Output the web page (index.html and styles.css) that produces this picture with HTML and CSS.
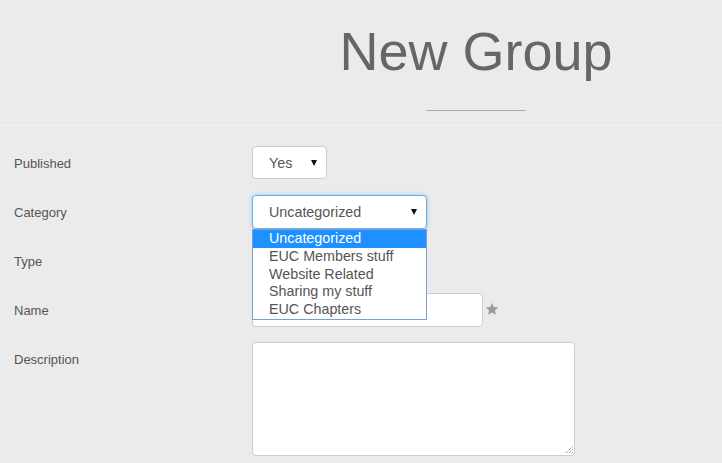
FILE: index.html
```html
<!DOCTYPE html>
<html>
<head>
<meta charset="utf-8">
<title>New Group</title>
<link rel="stylesheet" href="styles.css">
</head>
<body>
<header class="page-header">
  <div class="title-col">
    <h1 class="title">New Group</h1>
    <div class="title-rule"></div>
  </div>
</header>
<main class="form">
  <div class="row">
    <label class="label">Published</label>
    <div class="select select-short"><span>Yes</span><i class="caret"></i></div>
  </div>
  <div class="row row-category">
    <label class="label">Category</label>
    <div class="select-wrap">
      <div class="select select-wide focused"><span>Uncategorized</span><i class="caret"></i></div>
      <ul class="dropdown">
        <li class="active">Uncategorized</li>
        <li>EUC Members stuff</li>
        <li>Website Related</li>
        <li>Sharing my stuff</li>
        <li>EUC Chapters</li>
      </ul>
    </div>
  </div>
  <div class="row">
    <label class="label">Type</label>
  </div>
  <div class="row">
    <label class="label">Name</label>
    <div class="input"></div>
    <svg class="star" width="14" height="14" viewBox="0 0 24 24"><path d="M12 1.5l3.1 7.1 7.7.7-5.8 5.1 1.7 7.6L12 18l-6.7 4 1.7-7.6L1.2 9.3l7.7-.7z" fill="#9a9a9a"/></svg>
  </div>
  <div class="row">
    <label class="label">Description</label>
    <div class="textarea"><svg class="grip" width="9" height="9" viewBox="0 0 9 9"><path d="M8.5 1.5L1.5 8.5M8.5 4.5L4.5 8.5M8.5 7.5L7.5 8.5" stroke="#666" stroke-width="1" stroke-dasharray="1 1"/></svg></div>
  </div>
</main>
</body>
</html>
```
FILE: styles.css
```css
* { box-sizing: border-box; }
html, body { margin: 0; padding: 0; }
body {
  background: #ebebeb;
  font-family: "Liberation Sans", Arial, sans-serif;
  color: #555;
  width: 722px;
  height: 463px;
  overflow: hidden;
}
.page-header {
  height: 126px;
  border-bottom: 1px solid #f1f1f1;
  padding-left: 230px;
}
.title-col {
  display: flex;
  flex-direction: column;
  align-items: center;
  padding-top: 24px;
}
.title {
  margin: 0;
  font-weight: normal;
  font-size: 54px;
  line-height: 54px;
  color: #666;
}
.title-rule {
  margin-top: 32px;
  width: 100px;
  height: 1px;
  background: #a9a9a9;
}
.form {
  padding-top: 20px;
}
.row {
  display: flex;
  align-items: flex-start;
  height: 34px;
  margin-bottom: 15px;
}
.label {
  width: 252px;
  padding-left: 14px;
  padding-top: 1px;
  font-size: 13px;
  line-height: 34px;
  color: #555;
}
.select {
  position: relative;
  height: 34px;
  background: #fff;
  border: 1px solid #ccc;
  border-radius: 4px;
  padding-left: 16px;
  font-size: 14.3px;
  line-height: 33px;
  color: #555;
}
.select-short { width: 75px; height: 33px; }
.select-wide { width: 175px; }
.select.focused {
  border-color: #66afe9;
  box-shadow: 0 0 4px rgba(102,175,233,0.6);
}
.caret {
  position: absolute;
  right: 9px;
  top: 13px;
  width: 0;
  height: 0;
  border-left: 3.5px solid transparent;
  border-right: 3.5px solid transparent;
  border-top: 6px solid #111;
}
.select-wrap { position: relative; }
.dropdown {
  position: absolute;
  left: 0;
  top: 34px;
  width: 175px;
  margin: 0;
  padding: 0;
  list-style: none;
  background: #fff;
  border: 1px solid #7a9fd8;
  z-index: 5;
}
.dropdown li {
  padding-left: 16px;
  font-size: 14.3px;
  line-height: 17.8px;
  height: 17.8px;
  color: #555;
}
.dropdown li.active {
  background: #1e90ff;
  color: #fff;
}
.input {
  width: 231px;
  height: 34px;
  background: #fff;
  border: 1px solid #ccc;
  border-radius: 4px;
}
.star {
  margin-left: 2px;
  margin-top: 9px;
}
.textarea {
  position: relative;
  width: 323px;
  height: 114px;
  background: #fff;
  border: 1px solid #ccc;
  border-radius: 4px;
}
.grip {
  position: absolute;
  right: 1px;
  bottom: 1px;
}
```
